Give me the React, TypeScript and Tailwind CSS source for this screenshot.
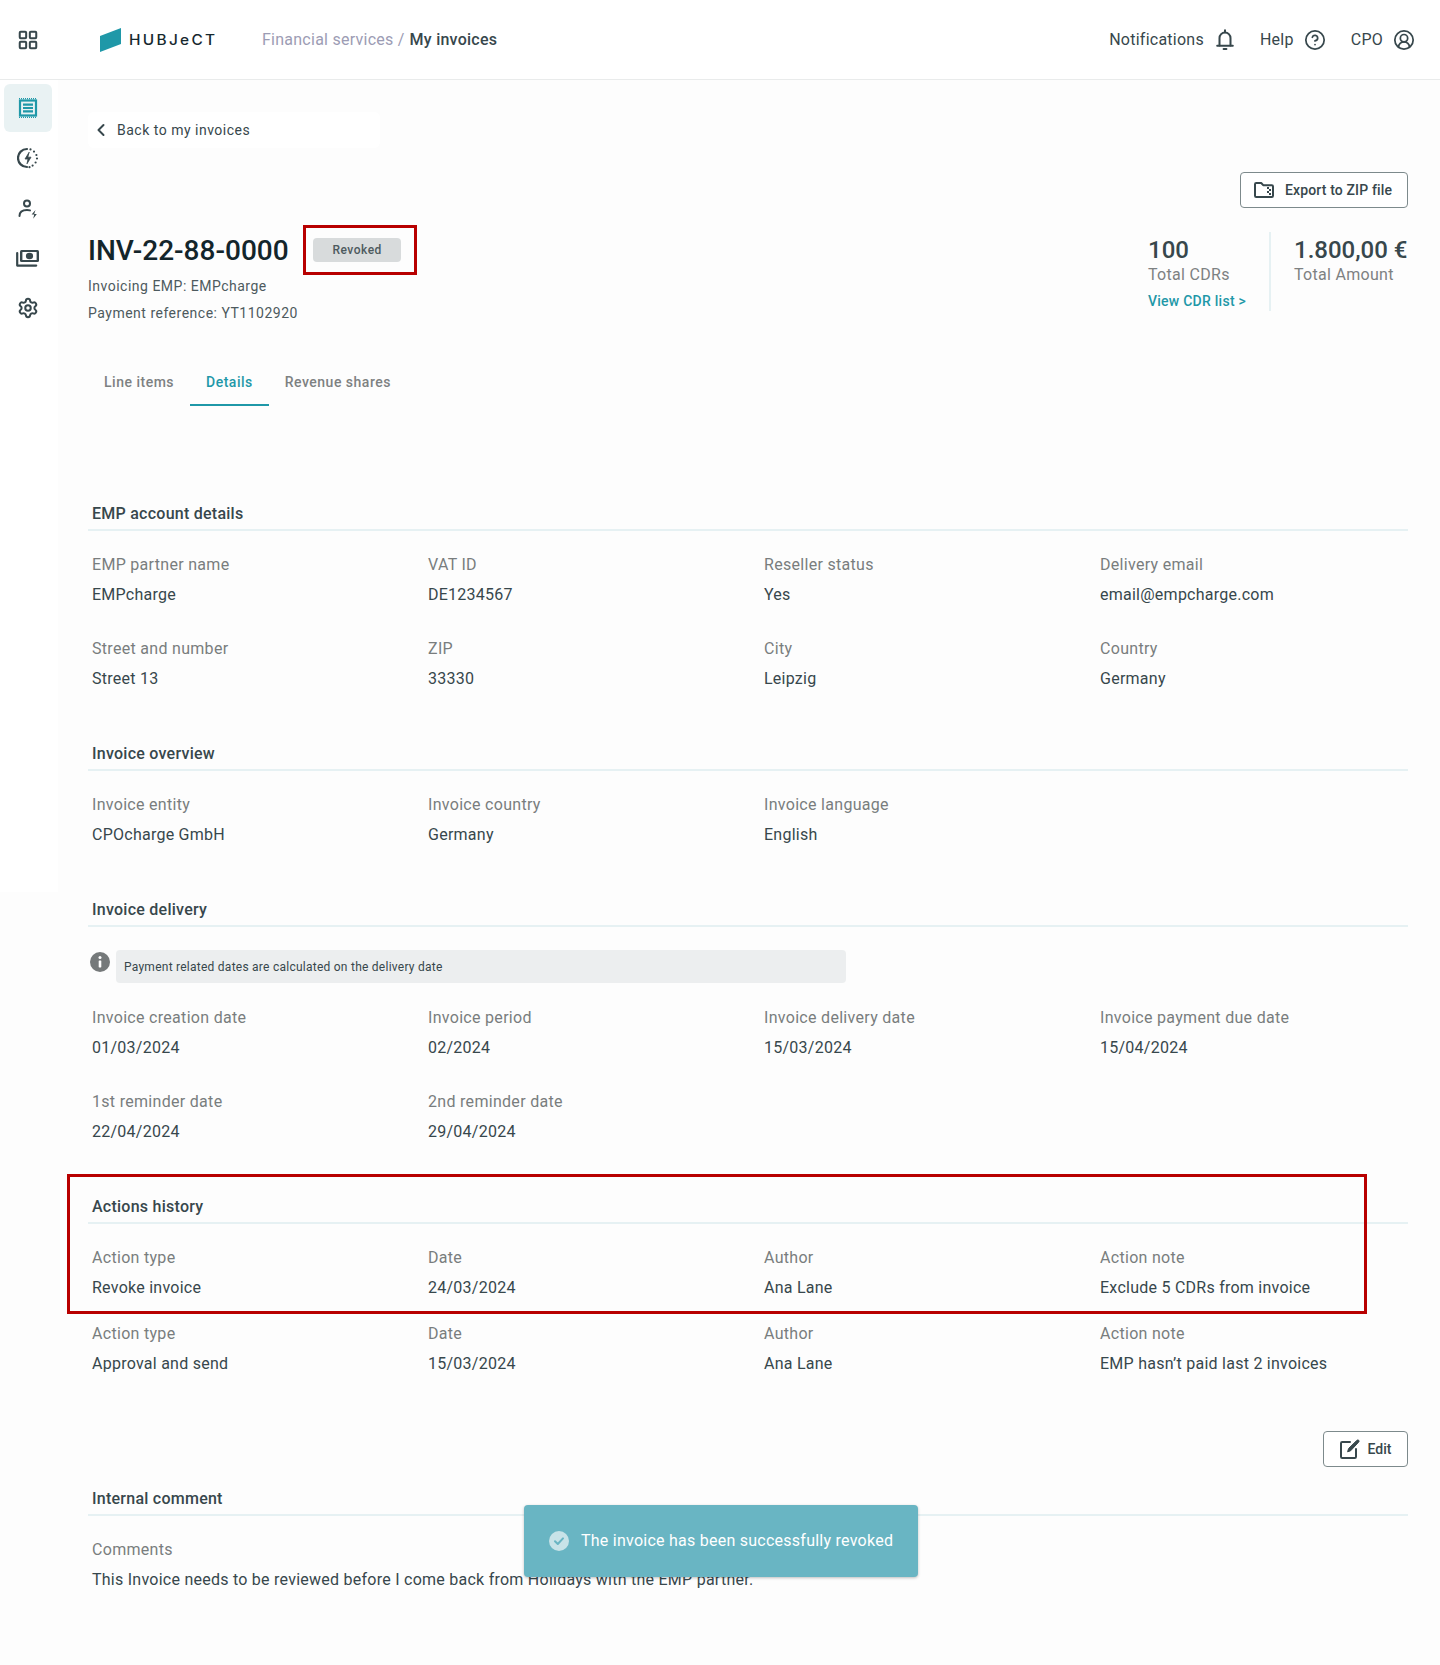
import { ChevronLeft, CircleHelp, CircleUserRound, LayoutGrid, Settings } from "lucide-react";

const SECTIONS_TOP = [
  {
    title: "EMP account details",
    rows: [
      [
        ["EMP partner name", "EMPcharge"],
        ["VAT ID", "DE1234567"],
        ["Reseller status", "Yes"],
        ["Delivery email", "email@empcharge.com"],
      ],
      [
        ["Street and number", "Street 13"],
        ["ZIP", "33330"],
        ["City", "Leipzig"],
        ["Country", "Germany"],
      ],
    ],
  },
  {
    title: "Invoice overview",
    rows: [
      [
        ["Invoice entity", "CPOcharge GmbH"],
        ["Invoice country", "Germany"],
        ["Invoice language", "English"],
      ],
    ],
  },
];

const DELIVERY_ROWS = [
  [
    ["Invoice creation date", "01/03/2024"],
    ["Invoice period", "02/2024"],
    ["Invoice delivery date", "15/03/2024"],
    ["Invoice payment due date", "15/04/2024"],
  ],
  [
    ["1st reminder date", "22/04/2024"],
    ["2nd reminder date", "29/04/2024"],
  ],
];

const HISTORY_ROWS = [
  [
    ["Action type", "Revoke invoice"],
    ["Date", "24/03/2024"],
    ["Author", "Ana Lane"],
    ["Action note", "Exclude 5 CDRs from invoice"],
  ],
  [
    ["Action type", "Approval and send"],
    ["Date", "15/03/2024"],
    ["Author", "Ana Lane"],
    ["Action note", "EMP hasn’t paid last 2 invoices"],
  ],
];

function SectionTitle({ children }: { children: string }) {
  return (
    <div className="border-b-2 border-[#e6f1f3] pb-[3px] pl-1 text-[16px] leading-6 font-medium tracking-[0.25px] text-[#37474c]">
      {children}
    </div>
  );
}

function Rows({ rows, gap }: { rows: string[][][]; gap: string }) {
  return (
    <div className={`flex flex-col pl-1 ${gap}`}>
      {rows.map((row, i) => (
        <div key={i} className="grid grid-cols-[336px_336px_336px_1fr]">
          {row.map(([label, value]) => (
            <div key={label} className="flex flex-col gap-1.5 text-[16px] leading-6">
              <div className="tracking-[0.3px] text-[#797d7e]">{label}</div>
              <div className="tracking-[0.25px] text-[#37474c]">{value}</div>
            </div>
          ))}
        </div>
      ))}
    </div>
  );
}

function InvoiceIcon() {
  return (
    <svg width="20" height="20" viewBox="0 0 20 20" fill="none" stroke="#1f98a8" strokeWidth="2.2">
      <rect x="2" y="2.5" width="16" height="15" />
      <path d="M5 6.7h10M5 10h10M5 13.4h10" />
      <path d="M1 .6h18M1 19.4h18" strokeWidth="1.2" strokeDasharray="1 1" />
    </svg>
  );
}

function ChargeIcon() {
  return (
    <svg width="22" height="22" viewBox="0 0 22 22" fill="none" stroke="#37474c" strokeWidth="2.2" strokeLinecap="round">
      <path d="M10 2a9 9 0 0 0 0 18" />
      <path d="M13.5 2.4v0M17 4.6v0M19.4 8v0M20 11.5v0M18.6 15.5v0M15.6 18.6v0M12.5 20.2v0" />
      <path d="M12 5.5 8 12h3l-1 4.8 4-6.6h-3z" fill="#37474c" strokeWidth="0.8" strokeLinejoin="round" />
    </svg>
  );
}

function PartnerIcon() {
  return (
    <svg width="20" height="20" viewBox="0 0 20 20" fill="none" stroke="#37474c" strokeWidth="2" strokeLinecap="round" className="mt-[2px]">
      <circle cx="9" cy="4.5" r="3" />
      <path d="M1.5 17c0-4 2.5-6 7.5-6 1.2 0 2.2.1 3 .4" />
      <path d="M17.5 11 13.6 15.6h2.6l-1 4.2 3.6-4.8h-2.6z" fill="#37474c" stroke="none" />
    </svg>
  );
}

function MoneyIcon() {
  return (
    <svg width="24" height="18" viewBox="0 0 24 18" fill="none">
      <path d="M1.2 4v12.6h19" stroke="#37474c" strokeWidth="2.2" strokeLinecap="round" strokeLinejoin="round" />
      <rect x="4" y="1" width="19" height="12" rx="1.5" fill="#37474c" />
      <rect x="6.4" y="3" width="14.2" height="8" fill="#fff" />
      <ellipse cx="13.5" cy="7" rx="3.6" ry="3.2" fill="#37474c" />
    </svg>
  );
}

function BellIcon() {
  return (
    <svg width="18" height="21" viewBox="0 0 18 21" fill="none" stroke="#37474c" strokeWidth="2" strokeLinecap="round" className="ml-3">
      <path d="M3.5 16.5V9a5.5 5.5 0 0 1 11 0v7.5" />
      <path d="M1.2 16.8h15.6" />
      <path d="M9 1.2v2M7.6 20h2.8" />
    </svg>
  );
}

function FolderIcon() {
  return (
    <svg width="20" height="16" viewBox="0 0 20 16" fill="none">
      <path
        d="M1 2.2c0-.7.5-1.2 1.2-1.2h5l2 2.2h8.6c.7 0 1.2.5 1.2 1.2v9.4c0 .7-.5 1.2-1.2 1.2H2.2c-.7 0-1.2-.5-1.2-1.2z"
        stroke="#37474c"
        strokeWidth="2"
        strokeLinejoin="round"
      />
      <path d="M13 5h2v2h-2zM15 7h2v2h-2zM13 9h2v2h-2zM15 11h2v2h-2z" fill="#37474c" />
    </svg>
  );
}

function EditIcon() {
  return (
    <svg width="20" height="20" viewBox="0 0 20 20" fill="none" stroke="#37474c" strokeWidth="2" strokeLinejoin="round" strokeLinecap="round">
      <path d="M10 3H2.2C1.5 3 1 3.5 1 4.2v13.6c0 .7.5 1.2 1.2 1.2h12.6c.7 0 1.2-.5 1.2-1.2V10" />
      <path d="M16.8 1.4c.6-.6 1.4-.6 1.9-.1s.5 1.3-.1 1.9l-8 8.6-3 1 .9-3z" fill="#37474c" strokeWidth="1" />
    </svg>
  );
}

function SuccessIcon() {
  return (
    <svg width="20" height="20" viewBox="0 0 20 20" fill="none" className="shrink-0">
      <circle cx="10" cy="10" r="10" fill="#c8e3e8" />
      <path d="M6 10.3 8.8 13 14 7.4" stroke="#69b5c3" strokeWidth="2" strokeLinecap="round" strokeLinejoin="round" />
    </svg>
  );
}

export default function App() {
  return (
    <div
      className="relative h-[1665px] w-[1440px] overflow-hidden bg-[#fdfdfd] text-[#37474c]"
      style={{ fontFamily: "Roboto, sans-serif" }}
    >
      <header className="flex h-[80px] items-center border-b border-[#e9ebeb] bg-white">
        <div className="flex w-[100px] shrink-0 justify-start pl-[17px]">
          <LayoutGrid size={22} strokeWidth={2.2} className="text-[#37474c]" />
        </div>
        <div className="flex w-[162px] shrink-0 items-center gap-2">
          <svg width="21" height="24" viewBox="0 0 21 24">
            <polygon points="0,8 21,0 21,16 0,24" fill="#1f98a8" />
          </svg>
          <span
            className="origin-left scale-x-110 text-[14px] leading-none font-medium tracking-[2.1px] text-[#16282e]"
            style={{ fontFamily: "Inter, sans-serif" }}
          >
            HUBJeCT
          </span>
        </div>
        <div className="flex items-center gap-[5px] text-[16px] tracking-[0.25px]">
          <span className="text-[#9c9cb4]">Financial services /</span>
          <span className="font-medium text-[#37474c]">My invoices</span>
        </div>
        <div className="ml-auto flex items-center pr-[25px] text-[16px] tracking-[0.25px] text-[#37474c]">
          <span>Notifications</span>
          <BellIcon />
          <span className="ml-[26px]">Help</span>
          <CircleHelp size={22} strokeWidth={1.9} className="ml-2.5" />
          <span className="ml-[25px]">CPO</span>
          <CircleUserRound size={22} strokeWidth={1.9} className="ml-2.5" />
        </div>
      </header>

      <div className="flex">
        <aside className="flex h-[812px] w-[58px] shrink-0 flex-col items-center bg-white pt-1 pr-[6px] pl-1">
          <div className="flex h-12 w-12 items-center justify-center rounded-md bg-[#e9f2f3]">
            <InvoiceIcon />
          </div>
          <div className="mt-[2px] flex h-12 w-12 items-center justify-center">
            <ChargeIcon />
          </div>
          <div className="mt-[2px] flex h-12 w-12 items-center justify-center">
            <PartnerIcon />
          </div>
          <div className="mt-[2px] flex h-12 w-12 items-center justify-center">
            <MoneyIcon />
          </div>
          <div className="mt-[2px] flex h-12 w-12 items-center justify-center">
            <Settings size={22} strokeWidth={2.2} className="text-[#37474c]" />
          </div>
        </aside>

        <main className="min-w-0 flex-1 pr-8 pl-[30px]">
          <div className="mt-8 flex h-9 w-[292px] items-center rounded-md bg-white pl-[3px] text-[14px] tracking-[0.5px] text-[#37474c]">
            <ChevronLeft size={20} strokeWidth={2.4} />
            <span className="ml-[6px]">Back to my invoices</span>
          </div>

          <div className="mt-6 flex justify-end">
            <button className="flex h-9 w-[168px] items-center justify-center gap-[11px] rounded border border-[#7d8a8c] bg-white pr-[2px] text-[14px] font-medium tracking-[0.15px] text-[#37474c]">
              <FolderIcon />
              Export to ZIP file
            </button>
          </div>

          <div className="mt-6 flex items-start justify-between">
            <div>
              <div className="flex h-9 items-center">
                <h1 className="pt-[2px] text-[28px] leading-9 font-medium text-[#13252b]">INV-22-88-0000</h1>
                <span className="ml-6 flex h-6 w-[88px] items-center justify-center rounded bg-[#d8dbdc] pl-px text-[12px] font-medium tracking-[0.5px] text-[#4d5a5e]">
                  Revoked
                </span>
              </div>
              <div className="mt-2 text-[14px] leading-5 tracking-[0.5px] text-[#4d5a5e]">Invoicing EMP: EMPcharge</div>
              <div className="mt-[7px] text-[14px] leading-5 tracking-[0.5px] text-[#4d5a5e]">
                Payment reference: YT1102920
              </div>
            </div>
            <div className="flex">
              <div className="w-[121px]">
                <div className="text-[24px] leading-9 font-medium text-[#37474c]">100</div>
                <div className="text-[16px] leading-[13px] tracking-[0.3px] text-[#7d8182]">Total CDRs</div>
                <div className="mt-[10px] text-[14px] leading-5 font-medium tracking-[0.25px] text-[#1f98a8]">
                  View CDR list &gt;
                </div>
              </div>
              <div className="w-[139px] border-l-2 border-[#e6f1f3] pl-[23px]">
                <div className="text-[24px] leading-9 font-medium whitespace-nowrap text-[#37474c]">1.800,00 €</div>
                <div className="text-[16px] leading-[13px] tracking-[0.3px] whitespace-nowrap text-[#7d8182]">
                  Total Amount
                </div>
              </div>
            </div>
          </div>

          <div className="mt-[37px] flex text-[14px] leading-5 font-medium tracking-[0.5px] text-[#7d8182]">
            <div className="px-4 pt-3 pb-[14px]">Line items</div>
            <div className="border-b-2 border-[#1f98a8] px-4 pt-3 pb-3 text-[#1f98a8]">Details</div>
            <div className="px-4 pt-3 pb-[14px]">Revenue shares</div>
          </div>

          <div className="mt-[96px] flex flex-col gap-[51px]">
            {SECTIONS_TOP.map((section) => (
              <section key={section.title}>
                <SectionTitle>{section.title}</SectionTitle>
                <Rows rows={section.rows} gap="mt-[22px] gap-[30px]" />
              </section>
            ))}
            <section>
              <SectionTitle>Invoice delivery</SectionTitle>
              <div className="mt-[23px] flex items-start">
                <svg width="20" height="20" viewBox="0 0 20 20" className="mt-[2px] ml-[2px] shrink-0">
                  <circle cx="10" cy="10" r="10" fill="#75797a" />
                  <circle cx="10" cy="5.6" r="1.5" fill="#fff" />
                  <rect x="8.7" y="8.4" width="2.6" height="7" rx="0.6" fill="#fff" />
                </svg>
                <div className="ml-[6px] flex h-[33px] w-[730px] items-center rounded bg-[#eceeef] pl-2 text-[12px] tracking-[0.25px] text-[#37474c]">
                  Payment related dates are calculated on the delivery date
                </div>
              </div>
              <Rows rows={DELIVERY_ROWS} gap="mt-[23px] gap-[30px]" />
            </section>
            <section>
              <SectionTitle>Actions history</SectionTitle>
              <Rows rows={HISTORY_ROWS} gap="mt-[22px] gap-[22px]" />
            </section>
          </div>

          <div className="mt-[55px] flex justify-end">
            <button className="flex h-9 w-[85px] items-center justify-center gap-2 rounded border border-[#7d8a8c] bg-white text-[14px] font-medium text-[#37474c]">
              <EditIcon />
              Edit
            </button>
          </div>

          <section className="mt-5">
            <SectionTitle>Internal comment</SectionTitle>
            <div className="mt-[22px] flex flex-col gap-1.5 pl-1 text-[16px] leading-6">
              <div className="tracking-[0.3px] text-[#797d7e]">Comments</div>
              <div className="tracking-[0.25px] text-[#37474c]">
                This Invoice needs to be reviewed before I come back from Holidays with the EMP partner.
              </div>
            </div>
          </section>
        </main>
      </div>

      {/* review annotations */}
      <div className="absolute top-[225px] left-[303px] h-[50px] w-[114px] border-[3px] border-[#b80000]" />
      <div className="absolute top-[1174px] left-[67px] h-[140px] w-[1300px] border-[3px] border-[#b80000]" />

      <div className="absolute top-[1505px] left-[524px] flex h-[72px] w-[394px] items-center gap-[12px] rounded bg-[#69b5c3] pl-[25px] text-[16px] tracking-[0.25px] text-white shadow-[0_1px_3px_rgba(0,0,0,0.25)]">
        <SuccessIcon />
        The invoice has been successfully revoked
      </div>
    </div>
  );
}
